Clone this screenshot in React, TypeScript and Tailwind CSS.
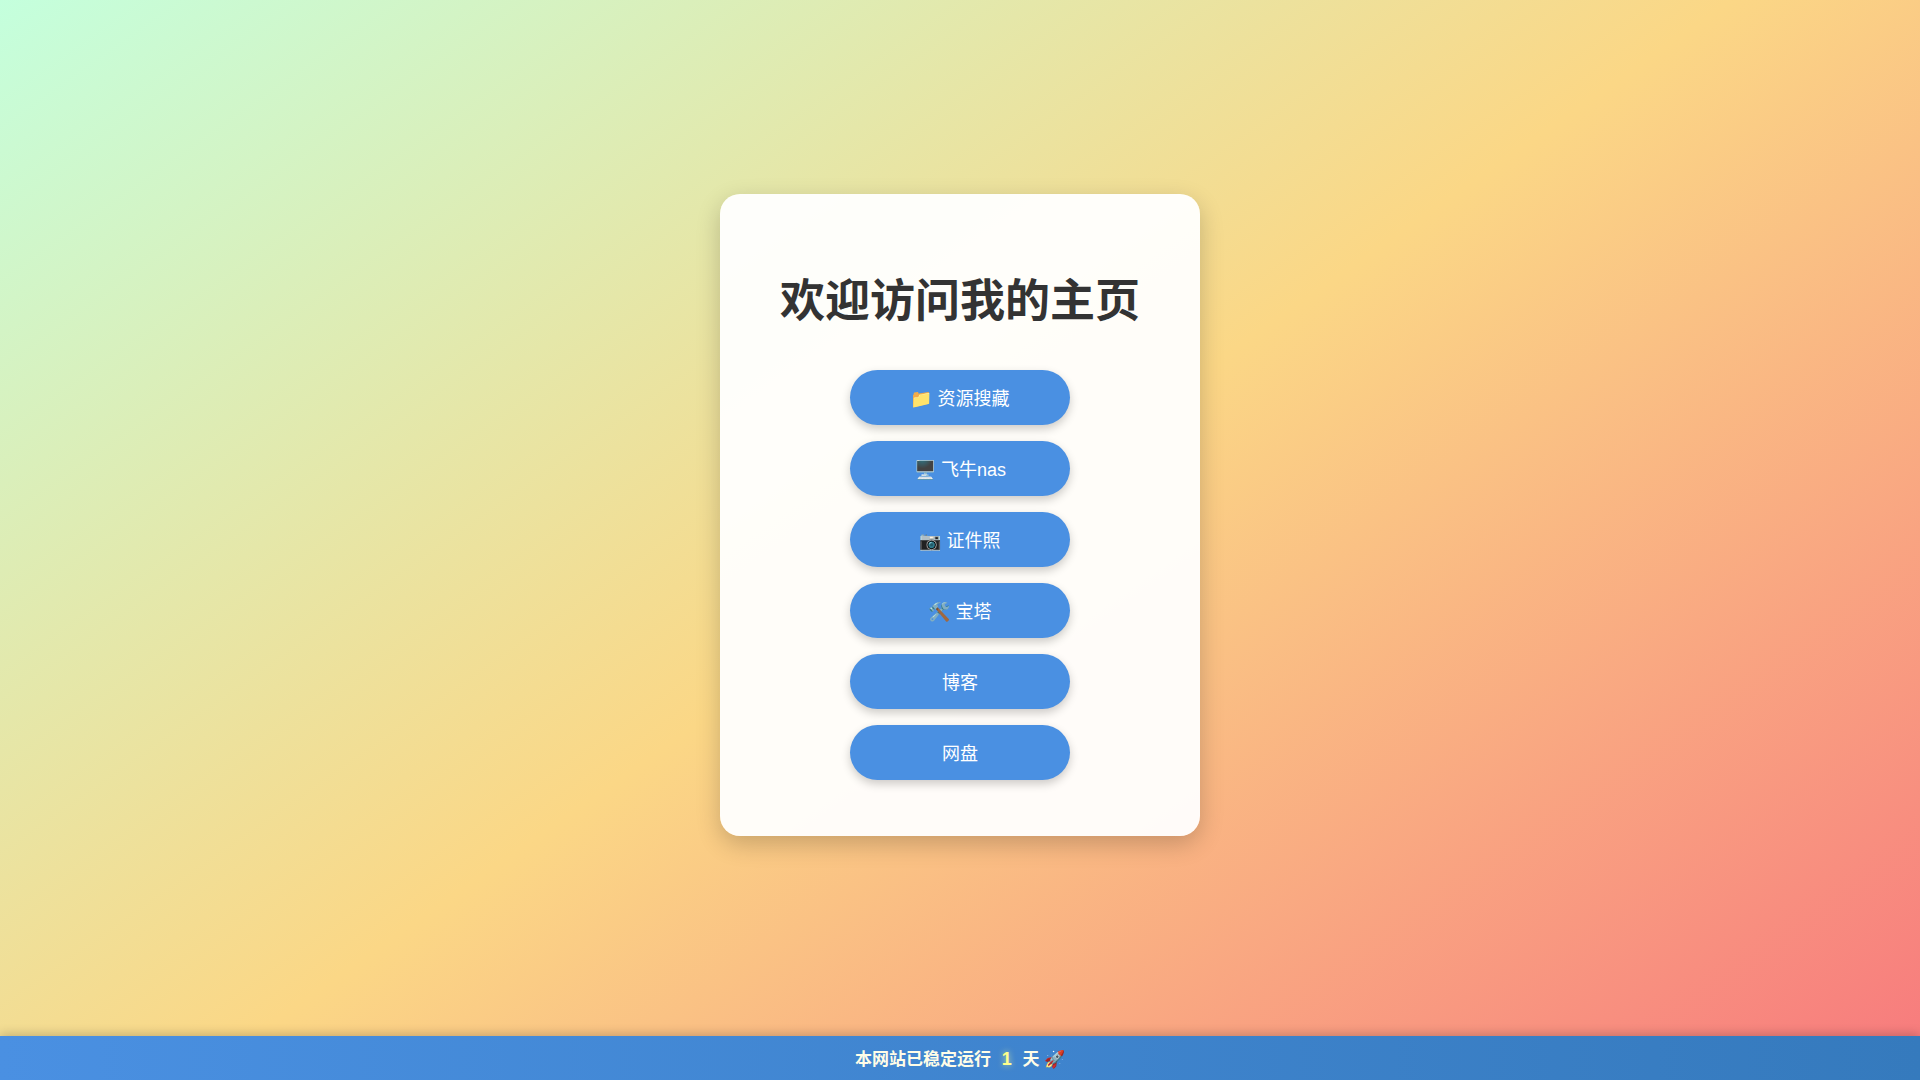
const links = [
	{ label: "📁 资源搜藏", href: "#resources" },
	{ label: "🖥️ 飞牛nas", href: "#nas" },
	{ label: "📷 证件照", href: "#photo" },
	{ label: "🛠️ 宝塔", href: "#panel" },
	{ label: "博客", href: "#blog" },
	{ label: "网盘", href: "#drive" },
];

/** Full-width bar at the bottom that counts the days the site has been up. */
function UptimeBar({ days }: { days: number }) {
	return (
		<footer className="bg-linear-to-r from-[#4a90e2] to-[#357abd] pt-3 pb-2 text-center text-[17px] leading-6 font-bold text-[#fffde7] shadow-[0_-2px_10px_rgba(0,0,0,0.2)]">
			本网站已稳定运行{" "}
			<span className="mx-1.5 text-lg leading-none text-[#ffff8d] [text-shadow:0_0_6px_rgba(255,255,141,0.7)]">
				{days}
			</span>{" "}
			天 🚀
		</footer>
	);
}

export default function App() {
	return (
		<div className="flex min-h-screen flex-col bg-[linear-gradient(145deg,#c4ffdd,#fbd786,#f7797d)] font-['Liberation_Sans','Noto_Sans_CJK_SC',sans-serif]">
			<main className="flex flex-1 items-center justify-center pb-1.5">
				<div className="flex w-[480px] flex-col items-center rounded-[20px] bg-white/95 px-10 pt-20 pb-14 shadow-[0_8px_24px_rgba(0,0,0,0.2)]">
					<h1 className="mb-10 text-[45px] leading-[56px] font-bold text-[#333]">
						欢迎访问我的主页
					</h1>
					<nav className="flex flex-col gap-4">
						{links.map((link) => (
							<a
								key={link.label}
								href={link.href}
								className="flex h-[55px] w-[220px] items-center justify-center rounded-full bg-[#4a90e2] pt-0.5 text-lg text-white shadow-[0_4px_10px_rgba(0,0,0,0.2)]"
							>
								{link.label}
							</a>
						))}
					</nav>
				</div>
			</main>
			<UptimeBar days={1} />
		</div>
	);
}
